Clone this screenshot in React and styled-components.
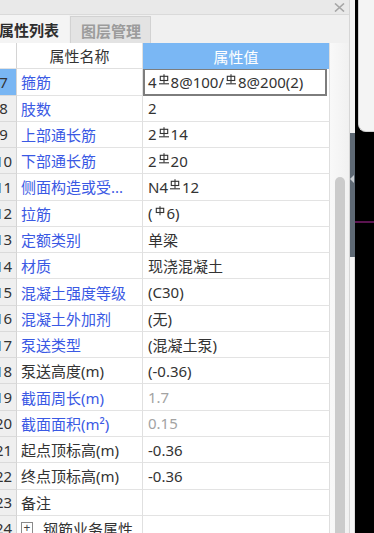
import styled, { createGlobalStyle } from "styled-components"

const GlobalStyle = createGlobalStyle`
    html, body {
        margin: 0;
        padding: 0;
        background: #ffffff;
        overflow: hidden;
    }
    body {
        font-family: "Noto Sans", "Noto Sans CJK SC", sans-serif;
        font-size: 15px;
        color: #333333;
    }
`

const BLUE = "#3a59e4"
const DARK = "#333333"
const GREY = "#a3a3a3"

// 钢筋等级符号 (一级钢 / 三级钢)
function Rebar({ grade }) {
    return (
        <Sym width="12" height="11" viewBox="0 0 12 11">
            <rect x="2.3" y="2.3" width="7.4" height="4.2" fill="none" stroke="currentColor" strokeWidth="1.1" />
            <line x1="6" y1="0.3" x2="6" y2={grade === 3 ? 9.6 : 9.2} stroke="currentColor" strokeWidth="1.1" />
            {grade === 3 && <line x1="1" y1="9.8" x2="11" y2="9.8" stroke="currentColor" strokeWidth="1.1" />}
        </Sym>
    )
}

const R3 = () => <Rebar grade={3} />
const R1 = () => <Rebar grade={1} />

const rows = [
    { n: 7, name: "箍筋", value: <>4<R3 />8@100/<R3 />8@200(2)</>, selected: true },
    { n: 8, name: "肢数", value: "2" },
    { n: 9, name: "上部通长筋", value: <>2<R3 />14</> },
    { n: 10, name: "下部通长筋", value: <>2<R3 />20</> },
    { n: 11, name: "侧面构造或受...", value: <>N4<R3 />12</> },
    { n: 12, name: "拉筋", value: <>(<R1 />6)</> },
    { n: 13, name: "定额类别", value: "单梁" },
    { n: 14, name: "材质", value: "现浇混凝土" },
    { n: 15, name: "混凝土强度等级", value: "(C30)" },
    { n: 16, name: "混凝土外加剂", value: "(无)" },
    { n: 17, name: "泵送类型", value: "(混凝土泵)" },
    { n: 18, name: "泵送高度(m)", value: "(-0.36)", plain: true },
    { n: 19, name: "截面周长(m)", value: "1.7", muted: true },
    { n: 20, name: "截面面积(m²)", value: "0.15", muted: true },
    { n: 21, name: "起点顶标高(m)", value: "-0.36", plain: true },
    { n: 22, name: "终点顶标高(m)", value: "-0.36", plain: true },
    { n: 23, name: "备注", value: "", plain: true },
    { n: 24, name: "钢筋业务属性", value: "", plain: true, group: true },
]

export default function App() {
    return (
        <>
            <GlobalStyle />
            <Root>
                <Panel>
                    <TitleBar>
                        <CloseIcon width="11" height="9" viewBox="0 0 11 9">
                            <path d="M1 0.5 L10 8.5 M10 0.5 L1 8.5" stroke="#a6a6a6" strokeWidth="1.6" />
                        </CloseIcon>
                    </TitleBar>
                    <TabStrip>
                        <Tab active>属性列表</Tab>
                        <Tab>图层管理</Tab>
                    </TabStrip>
                    <Body>
                        <Table>
                            <Row>
                                <NumCell head />
                                <HeadName>属性名称</HeadName>
                                <HeadValue>属性值</HeadValue>
                            </Row>
                            {rows.map((r) => (
                                <Row key={r.n}>
                                    <NumCell selected={r.selected}><span>{r.n}</span></NumCell>
                                    <NameCell color={r.plain ? DARK : BLUE}>
                                        {r.group && <PlusBox>+</PlusBox>}
                                        {r.name}
                                    </NameCell>
                                    {r.selected ? (
                                        <ValueCell><Editor>{r.value}</Editor></ValueCell>
                                    ) : (
                                        <ValueCell color={r.muted ? GREY : DARK}>{r.value}</ValueCell>
                                    )}
                                </Row>
                            ))}
                        </Table>
                        <ScrollTrack>
                            <Thumb />
                        </ScrollTrack>
                    </Body>
                </Panel>
                <Gutter>
                    <GutterTop />
                    <GutterSlate>
                        <Arrow />
                    </GutterSlate>
                    <GutterRest />
                </Gutter>
                <Dock>
                    <DockCard />
                    <DockLine />
                </Dock>
            </Root>
        </>
    )
}

const Root = styled.div`
    display: flex;
    flex-direction: row;
    width: 374px;
    height: 533px;
    overflow: hidden;
`
const Panel = styled.div`
    width: 349px;
    height: 533px;
    display: flex;
    flex-direction: column;
    border-right: 1px solid #d6d6d6;
    flex-shrink: 0;
`
const TitleBar = styled.div`
    height: 14px;
    background: #e9e9e9;
    border-bottom: 1px solid #dadada;
    display: flex;
    align-items: center;
    justify-content: flex-end;
    padding-right: 4px;
`
const CloseIcon = styled.svg`
    display: block;
    margin-top: 1px;
`
const TabStrip = styled.div`
    height: 28px;
    background: #f0f0f0;
    display: flex;
    flex-direction: row;
    align-items: flex-end;
    margin-left: -3px;
`
const Tab = styled.div`
    height: ${(props) => (props.active ? "28px" : "27px")};
    box-sizing: border-box;
    padding: 0 ${(props) => (props.active ? "10px" : "9px")} 0 ${(props) => (props.active ? "2px" : "10px")};
    display: flex;
    align-items: center;
    font-family: "Noto Sans CJK SC", sans-serif;
    font-weight: 700;
    font-size: 15px;
    color: ${(props) => (props.active ? "#2e2e2e" : "#9c9c9c")};
    background: ${(props) => (props.active ? "#f4f4f4" : "#e3e3e3")};
    border: ${(props) => (props.active ? "none" : "1px solid #d2d2d2")};
    border-bottom: none;
    margin-left: ${(props) => (props.active ? "0" : "1px")};
`
const Body = styled.div`
    flex: 1;
    display: flex;
    flex-direction: row;
    overflow: hidden;
`
const Table = styled.div`
    width: 330px;
    display: flex;
    flex-direction: column;
    flex-shrink: 0;
`
const Row = styled.div`
    display: grid;
    grid-template-columns: 17px 126px 187px;
    height: 26.27px;
    flex-shrink: 0;
`
const NumCell = styled.div`
    box-sizing: border-box;
    border-right: 1px solid #d4d4d4;
    border-bottom: 1px solid ${(props) => (props.head ? "#e2e2e2" : "#dadada")};
    background: ${(props) => (props.head ? "#ffffff" : props.selected ? "#79b6f3" : "#efefef")};
    display: flex;
    align-items: center;
    justify-content: center;
    padding-right: 9px;
    overflow: hidden;
    color: #333333;
    span {
        white-space: nowrap;
    }
`
const NameCell = styled.div`
    box-sizing: border-box;
    border-right: 1px solid #e0e0e0;
    border-bottom: 1px solid #e3e3e3;
    display: flex;
    align-items: center;
    padding-left: 4px;
    white-space: nowrap;
    overflow: hidden;
    color: ${(props) => props.color};
`
const ValueCell = styled.div`
    box-sizing: border-box;
    border-right: 1px solid #dedede;
    border-bottom: 1px solid #e3e3e3;
    display: flex;
    align-items: center;
    padding-left: 5px;
    white-space: nowrap;
    overflow: hidden;
    color: ${(props) => props.color || DARK};
    &:has(> span) {
        padding: 0 2px 0 0;
        border-bottom: none;
    }
`
const HeadName = styled(NameCell)`
    justify-content: center;
    padding-left: 0;
    color: #333333;
    border-bottom-color: #e0e0e0;
`
const HeadValue = styled.div`
    background: #7ab7f4;
    color: #ffffff;
    display: flex;
    align-items: center;
    justify-content: center;
    border-right: 1px solid #dedede;
`
const Editor = styled.span`
    box-sizing: border-box;
    width: 100%;
    height: 100%;
    display: flex;
    align-items: center;
    padding-left: 3px;
    border: 2px solid #7d7d7d;
    border-top: 1px solid #7d7d7d;
    background: #ffffff;
    color: ${DARK};
`
const Sym = styled.svg`
    display: inline-block;
    margin: 0 1px 0 1px;
    position: relative;
    top: -2px;
    flex-shrink: 0;
`
const PlusBox = styled.span`
    box-sizing: border-box;
    width: 12px;
    height: 12px;
    border: 1px solid #8a8a8a;
    display: inline-flex;
    align-items: center;
    justify-content: center;
    font-size: 12px;
    line-height: 1;
    margin-right: 10px;
    color: #444444;
`
const ScrollTrack = styled.div`
    width: 19px;
    background: linear-gradient(to right, #f9f9f9, #f1f1f1);
    display: flex;
    flex-direction: column;
    align-items: center;
    padding-top: 134px;
    flex-shrink: 0;
`
const Thumb = styled.div`
    width: 10px;
    flex: 1;
    background: #cbcbcb;
    border-radius: 5px 5px 0 0;
`
const Gutter = styled.div`
    width: 5px;
    display: flex;
    flex-direction: column;
    flex-shrink: 0;
`
const GutterTop = styled.div`
    height: 133px;
    background: #f2f2f2;
`
const GutterSlate = styled.div`
    height: 124px;
    background: #5e6974;
    display: flex;
    align-items: center;
`
const Arrow = styled.div`
    width: 0;
    height: 0;
    border-top: 4px solid transparent;
    border-bottom: 4px solid transparent;
    border-right: 4px solid #c9ced3;
    margin-top: -33px;
`
const GutterRest = styled.div`
    flex: 1;
    background: #f5f5f5;
    border-right: 1px solid #dcdcdc;
`
const Dock = styled.div`
    flex: 1;
    background: #000000;
    display: flex;
    flex-direction: column;
`
const DockCard = styled.div`
    height: 131px;
    margin-left: 3px;
    background: #f4f4f4;
    border-bottom-left-radius: 8px;
    border-left: 1px solid #d0d0d0;
    border-bottom: 1px solid #d0d0d0;
`
const DockLine = styled.div`
    height: 2px;
    margin-top: 89px;
    background: #5b1450;
`
